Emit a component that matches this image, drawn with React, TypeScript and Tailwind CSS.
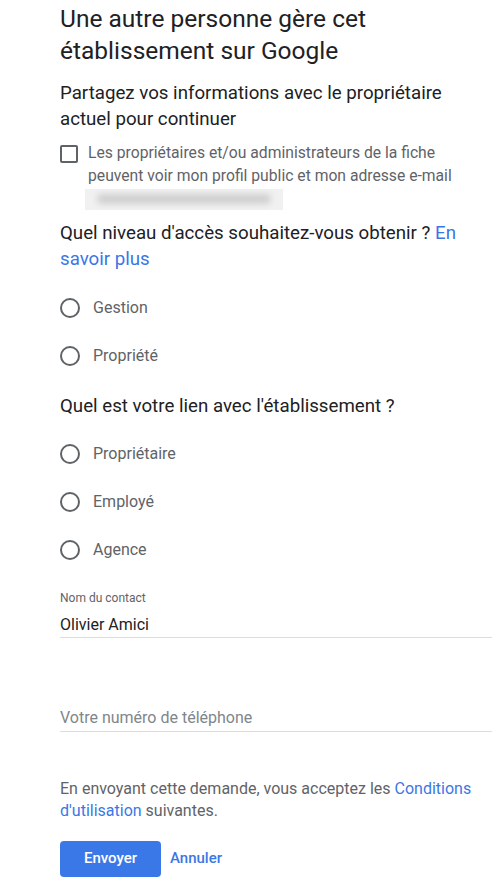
import React from "react";

const FONT = { fontFamily: "Roboto, 'Noto Sans', Arial, sans-serif" };

function Radio({ label }: { label: string }) {
  return (
    <label className="flex h-12 items-center cursor-pointer">
      <span className="box-border h-5 w-5 shrink-0 rounded-full border-2 border-[#5f6368]" />
      <span className="ml-[13px] text-[16px] leading-[22px] text-[#5f6368]">{label}</span>
    </label>
  );
}

export default function App() {
  return (
    <div className="min-h-screen bg-white text-[#202124]" style={FONT}>
      <div className="pl-[60px] pr-[6px] pt-[3px]">
        <h1 className="text-[24.5px] leading-[32px] font-normal text-[#202124]">
          Une autre personne gère cet établissement sur Google
        </h1>

        <p className="mt-[13px] text-[18.7px] leading-[26px] pr-4">
          Partagez vos informations avec le propriétaire actuel pour continuer
        </p>

        <div className="mt-[9px] flex items-start">
          <span className="mt-[3.5px] box-border h-[18px] w-[18px] shrink-0 rounded-[2px] border-2 border-[#5f6368]" />
          <p className="ml-[10px] text-[15.7px] leading-[23px] text-[#5f6368]">
            Les propriétaires et/ou administrateurs de la fiche peuvent voir mon profil public et mon adresse e-mail
          </p>
        </div>
        <div className="ml-[25px] mt-[1.5px] flex h-[21px] w-[198px] items-center overflow-hidden bg-[#f1f1f1]">
          <div className="mx-3 h-[10px] w-full rounded-full bg-[#cfcfcf] blur-[3px]" />
        </div>

        <p className="mt-[10px] text-[18.7px] leading-[26px] pr-4">
          Quel niveau d'accès souhaitez-vous obtenir ?{" "}
          <a className="text-[#3a77e6]">En savoir plus</a>
        </p>

        <div className="mt-3">
          <Radio label="Gestion" />
          <Radio label="Propriété" />
        </div>

        <p className="mt-[13px] text-[18.7px] leading-[26px]">
          Quel est votre lien avec l'établissement ?
        </p>

        <div className="mt-[11px]">
          <Radio label="Propriétaire" />
          <Radio label="Employé" />
          <Radio label="Agence" />
        </div>

        <div className="mt-4">
          <div className="text-[12px] leading-[16px] text-[#5f6368]">Nom du contact</div>
          <div className="mt-[7px] border-b border-[#dadce0] text-[16px] leading-[24px] text-[#202124]">
            Olivier Amici
          </div>
        </div>

        <div className="mt-[68px] border-b border-[#dadce0] pb-[1px] text-[16px] leading-[24px] text-[#80868b]">
          Votre numéro de téléphone
        </div>

        <p className="mt-[46px] text-[16px] leading-[22px] text-[#5f6368] pr-2">
          En envoyant cette demande, vous acceptez les{" "}
          <a className="text-[#3a77e6]">Conditions d'utilisation</a> suivantes.
        </p>

        <div className="mt-[19px] flex items-center">
          <button className="h-9 w-[101px] rounded-[4px] bg-[#3b78e7] text-[15px] font-medium text-white">
            Envoyer
          </button>
          <button className="ml-[9px] text-[15px] font-medium text-[#3a77e6]">Annuler</button>
        </div>
      </div>
    </div>
  );
}
